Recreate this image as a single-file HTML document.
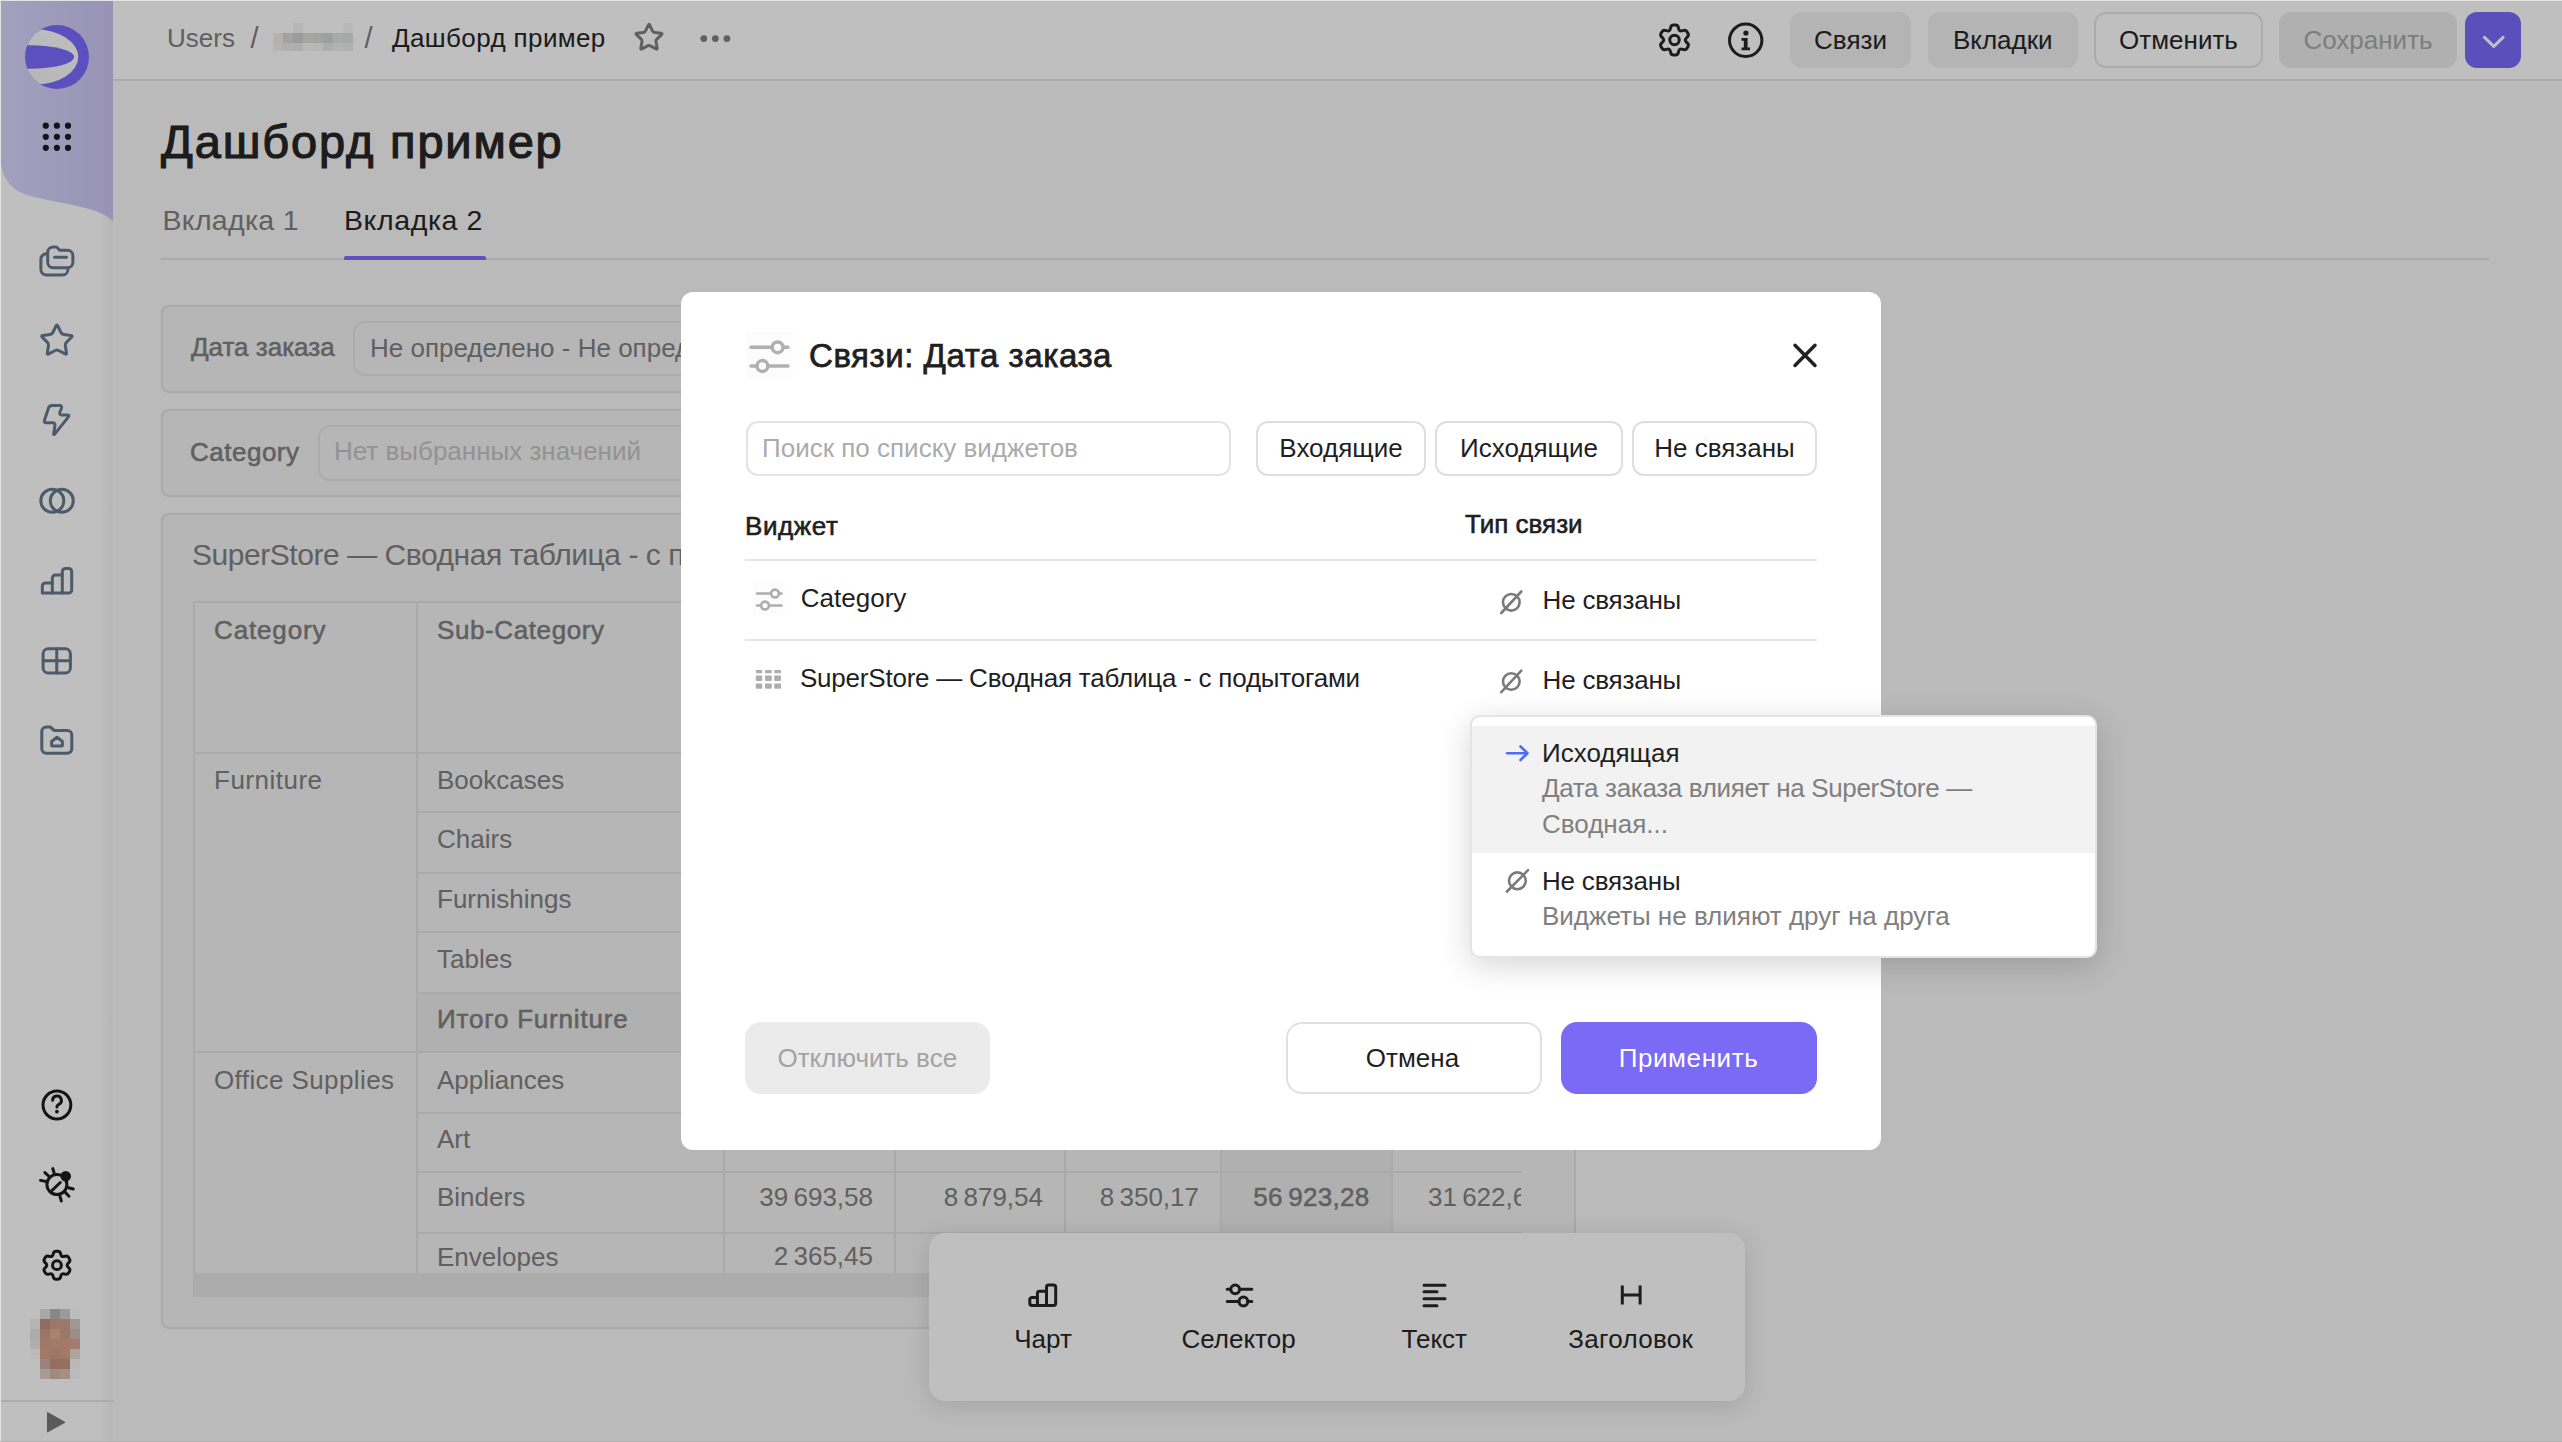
<!DOCTYPE html>
<html><head><meta charset="utf-8">
<style>
*{box-sizing:border-box}
html,body{margin:0;padding:0}
body{width:2562px;height:1442px;overflow:hidden;position:relative;background:#f8f8f8;font-family:"Liberation Sans",sans-serif;color:#262626}
.a{position:absolute}
.t{position:absolute;white-space:nowrap;line-height:1}
svg{position:absolute;overflow:visible}
.ic{fill:none;stroke-linecap:round;stroke-linejoin:round}
</style></head><body>

<div class="a" style="left:113px;top:0px;width:2449px;height:80px;background:#fff"></div>
<div class="a" style="left:113px;top:79px;width:2449px;height:2px;background:#e4e4e4"></div>
<div class="a" style="left:0px;top:0px;width:113px;height:1442px;background:#fff"></div>
<div class="a" style="left:101px;top:0px;width:12px;height:1442px;background:linear-gradient(90deg,rgba(0,0,0,0),rgba(0,0,0,.05))"></div>
<svg style="left:0px;top:0px" width="113" height="230" viewBox="0 0 113 230"><defs><linearGradient id="pg" x1="0" x2="1" y1="0" y2="0"><stop offset="0" stop-color="#dbd6fe"/><stop offset="1" stop-color="#cbc5f2"/></linearGradient></defs><path d="M0 0H113V221C106 215 98 211 85 208C72 204 50 201 30 196C12 191 2 180 0 158Z" fill="url(#pg)"/></svg>
<svg style="left:25px;top:25px" width="64" height="64" viewBox="0 0 64 64"><defs><clipPath id="lc"><circle cx="32" cy="32" r="32"/></clipPath><linearGradient id="lg" x1="0" y1="1" x2="1" y2="0"><stop offset="0" stop-color="#f0f0f6"/><stop offset="1" stop-color="#ffffff"/></linearGradient></defs><circle cx="32" cy="32" r="32" fill="#7a6bfc"/><g clip-path="url(#lc)"><ellipse cx="10" cy="32" rx="43.3" ry="27.7" fill="url(#lg)"/><ellipse cx="5" cy="32" rx="44.2" ry="11.7" fill="#7a6bfc"/></g></svg>
<svg style="left:0px;top:0px" width="113" height="160" viewBox="0 0 113 160"><circle cx="45.8" cy="125.7" r="3.1" fill="#1b1b1b"/><circle cx="45.8" cy="136.8" r="3.1" fill="#1b1b1b"/><circle cx="45.8" cy="147.8" r="3.1" fill="#1b1b1b"/><circle cx="56.9" cy="125.7" r="3.1" fill="#1b1b1b"/><circle cx="56.9" cy="136.8" r="3.1" fill="#1b1b1b"/><circle cx="56.9" cy="147.8" r="3.1" fill="#1b1b1b"/><circle cx="68" cy="125.7" r="3.1" fill="#1b1b1b"/><circle cx="68" cy="136.8" r="3.1" fill="#1b1b1b"/><circle cx="68" cy="147.8" r="3.1" fill="#1b1b1b"/></svg>
<svg style="left:0px;top:0px" width="113" height="800" viewBox="0 0 113 800"><g class="ic" stroke="#66798d" stroke-width="3"><path d="M47.7 262.3V252.5a5.5 5.5 0 0 1 5.5-5.5h3.3l3.4 3.3h7.5a5.5 5.5 0 0 1 5.5 5.5v6.5a5.5 5.5 0 0 1-5.5 5.5H53.2a5.5 5.5 0 0 1-5.5-5.5z"/><path d="M54.5 257.2h12"/><path d="M46.5 253.8a5.5 5.5 0 0 0-5.6 5.5v10.2a5.5 5.5 0 0 0 5.5 5.5h16a5.5 5.5 0 0 0 5.5-5.3"/><path d="M56.01 325.99 Q56.90 324.20 57.79 325.99 L60.98 332.47 Q61.87 334.26 63.85 334.55 L70.99 335.59 Q72.97 335.88 71.54 337.27 L66.37 342.32 Q64.94 343.71 65.27 345.68 L66.50 352.80 Q66.83 354.77 65.06 353.84 L58.67 350.48 Q56.90 349.55 55.13 350.48 L48.74 353.84 Q46.97 354.77 47.30 352.80 L48.53 345.68 Q48.86 343.71 47.43 342.32 L42.26 337.27 Q40.83 335.88 42.81 335.59 L49.95 334.55 Q51.93 334.26 52.82 332.47Z"/><path d="M48.42 408.26 Q49.30 405.60 52.10 405.60 L59.60 405.60 Q62.40 405.60 61.41 408.22 L59.89 412.28 Q58.90 414.90 61.70 414.90 L67.20 414.90 Q70.00 414.90 68.25 417.09 L55.05 433.61 Q53.30 435.80 53.75 433.04 L54.95 425.56 Q55.40 422.80 52.60 422.80 L46.40 422.80 Q43.60 422.80 44.48 420.14Z"/><circle cx="52.3" cy="500.8" r="11.5"/><circle cx="61.8" cy="500.8" r="11.5"/><path d="M42.3 593.1V586a3 3 0 0 1 3-3H52.3V578.1a3 3 0 0 1 3-3H62.3V571.5a3 3 0 0 1 3-3H68.7a3 3 0 0 1 3 3V590.1a3 3 0 0 1-3 3Z"/><path d="M52.3 583V593M62.3 575.1V593"/><rect x="43.1" y="648.8" width="27.3" height="24.1" rx="5"/><path d="M56.75 648.8V672.9M43.1 660.85H70.4"/><path d="M41.8 731.5a4.5 4.5 0 0 1 4.5-4.5h4l4 3.5h13a4.5 4.5 0 0 1 4.5 4.5v13.7a4.5 4.5 0 0 1-4.5 4.5H46.3a4.5 4.5 0 0 1-4.5-4.5z"/><path d="M51.6 741.5l5.4-4.3 5.4 4.3v3.5a1 1 0 0 1-1 1h-8.8a1 1 0 0 1-1-1z"/></g></svg>
<svg style="left:0px;top:1000px" width="113" height="442" viewBox="0 0 113 442"><g class="ic" stroke="#1b1b1b" stroke-width="3"><circle cx="56.9" cy="105" r="13.9"/><path d="M52.6 100.2a4.4 4.4 0 1 1 6.2 4.2c-1.3.6-1.9 1.4-1.9 2.6"/><circle cx="56.9" cy="184.5" r="10"/><path d="M52 190.5L60.3 182.5"/><path d="M52.8 168.6L54.2 173.2M44.9 172.6L48.6 176M40.5 180.4L45.4 181.4M73.3 189L68.4 187.8M69 196.2L65.3 192.4M61.3 201L59.9 196.2"/></g><circle cx="65.7" cy="176.3" r="5.3" fill="#1b1b1b"/><circle cx="56.9" cy="111.6" r="1.9" fill="#1b1b1b"/><g class="ic" stroke="#1b1b1b" stroke-width="3"><path d="M51.87 256.41 Q52.70 255.93 53.28 253.80 L53.40 253.34 Q53.98 251.21 56.18 251.21 L57.72 251.21 Q59.92 251.21 60.50 253.34 L60.62 253.80 Q61.20 255.93 62.03 256.41 L62.03 256.41 Q62.86 256.89 64.98 256.32 L65.45 256.20 Q67.58 255.63 68.68 257.54 L69.45 258.88 Q70.55 260.78 69.00 262.34 L68.66 262.68 Q67.10 264.24 67.10 265.20 L67.10 265.20 Q67.10 266.16 68.66 267.72 L69.00 268.06 Q70.55 269.62 69.45 271.52 L68.68 272.86 Q67.58 274.77 65.45 274.20 L64.98 274.08 Q62.86 273.51 62.03 273.99 L62.03 273.99 Q61.20 274.47 60.62 276.60 L60.50 277.06 Q59.92 279.19 57.72 279.19 L56.18 279.19 Q53.98 279.19 53.40 277.06 L53.28 276.60 Q52.70 274.47 51.87 273.99 L51.87 273.99 Q51.04 273.51 48.92 274.08 L48.45 274.20 Q46.32 274.77 45.22 272.86 L44.45 271.52 Q43.35 269.62 44.90 268.06 L45.24 267.72 Q46.80 266.16 46.80 265.20 L46.80 265.20 Q46.80 264.24 45.24 262.68 L44.90 262.34 Q43.35 260.78 44.45 258.88 L45.22 257.54 Q46.32 255.63 48.45 256.20 L48.92 256.32 Q51.04 256.89 51.87 256.41Z"/><circle cx="56.95" cy="265.2" r="4.4"/></g></svg>
<div class="a" style="left:40px;top:1309px;width:10px;height:10px;background:#e1e1e1"></div>
<div class="a" style="left:50px;top:1309px;width:10px;height:10px;background:#b8b5b5"></div>
<div class="a" style="left:60px;top:1309px;width:10px;height:10px;background:#d1cfcf"></div>
<div class="a" style="left:70px;top:1309px;width:10px;height:10px;background:#fdfdfd"></div>
<div class="a" style="left:30px;top:1319px;width:10px;height:10px;background:#f1f1f1"></div>
<div class="a" style="left:40px;top:1319px;width:10px;height:10px;background:#bf917d"></div>
<div class="a" style="left:50px;top:1319px;width:10px;height:10px;background:#d0a088"></div>
<div class="a" style="left:60px;top:1319px;width:10px;height:10px;background:#d5a28a"></div>
<div class="a" style="left:70px;top:1319px;width:10px;height:10px;background:#d3cac8"></div>
<div class="a" style="left:30px;top:1329px;width:10px;height:10px;background:#e8e5e4"></div>
<div class="a" style="left:40px;top:1329px;width:10px;height:10px;background:#cf9e86"></div>
<div class="a" style="left:50px;top:1329px;width:10px;height:10px;background:#e2ae95"></div>
<div class="a" style="left:60px;top:1329px;width:10px;height:10px;background:#d1a089"></div>
<div class="a" style="left:70px;top:1329px;width:10px;height:10px;background:#d3bcb3"></div>
<div class="a" style="left:30px;top:1339px;width:10px;height:10px;background:#eee8e8"></div>
<div class="a" style="left:40px;top:1339px;width:10px;height:10px;background:#d5a28a"></div>
<div class="a" style="left:50px;top:1339px;width:10px;height:10px;background:#dca28d"></div>
<div class="a" style="left:60px;top:1339px;width:10px;height:10px;background:#dca08a"></div>
<div class="a" style="left:70px;top:1339px;width:10px;height:10px;background:#dba692"></div>
<div class="a" style="left:30px;top:1349px;width:10px;height:10px;background:#fbf8f8"></div>
<div class="a" style="left:40px;top:1349px;width:10px;height:10px;background:#d9a289"></div>
<div class="a" style="left:50px;top:1349px;width:10px;height:10px;background:#d39d8e"></div>
<div class="a" style="left:60px;top:1349px;width:10px;height:10px;background:#dca28c"></div>
<div class="a" style="left:70px;top:1349px;width:10px;height:10px;background:#e8dad5"></div>
<div class="a" style="left:40px;top:1359px;width:10px;height:10px;background:#cdb1a5"></div>
<div class="a" style="left:50px;top:1359px;width:10px;height:10px;background:#c8927e"></div>
<div class="a" style="left:60px;top:1359px;width:10px;height:10px;background:#c69580"></div>
<div class="a" style="left:70px;top:1359px;width:10px;height:10px;background:#f9f6f5"></div>
<div class="a" style="left:40px;top:1369px;width:10px;height:10px;background:#dccfca"></div>
<div class="a" style="left:50px;top:1369px;width:10px;height:10px;background:#d4b8aa"></div>
<div class="a" style="left:60px;top:1369px;width:10px;height:10px;background:#dcbeb6"></div>
<div class="a" style="left:70px;top:1369px;width:10px;height:10px;background:#fbf9f8"></div>
<div class="a" style="left:1px;top:1400px;width:112px;height:2px;background:#e6e6e6"></div>
<svg style="left:0px;top:1400px" width="113" height="42" viewBox="0 0 113 42"><path d="M47.5 12.5L65 22.3L47.5 32Z" fill="#787878" stroke="#787878" stroke-width="1" stroke-linejoin="round"/></svg>
<div class="t" style="top:25.0px;font-size:26px;color:#808080;left:167px;">Users</div>
<div class="t" style="top:23.5px;font-size:29px;color:#808080;left:250.5px;">/</div>
<div class="t" style="top:23.5px;font-size:29px;color:#808080;left:364.5px;">/</div>
<div class="a" style="left:293px;top:23px;width:10px;height:10px;background:#f5f5f5"></div>
<div class="a" style="left:343px;top:23px;width:10px;height:10px;background:#f6f6f6"></div>
<div class="a" style="left:273px;top:33px;width:10px;height:10px;background:#efeeeb"></div>
<div class="a" style="left:283px;top:33px;width:10px;height:10px;background:#d8d8d5"></div>
<div class="a" style="left:293px;top:33px;width:10px;height:10px;background:#cfcfd3"></div>
<div class="a" style="left:303px;top:33px;width:10px;height:10px;background:#dcdcdc"></div>
<div class="a" style="left:313px;top:33px;width:10px;height:10px;background:#dbdad5"></div>
<div class="a" style="left:323px;top:33px;width:10px;height:10px;background:#d3d4d8"></div>
<div class="a" style="left:333px;top:33px;width:10px;height:10px;background:#e3e3e0"></div>
<div class="a" style="left:343px;top:33px;width:10px;height:10px;background:#dfe3e2"></div>
<div class="a" style="left:273px;top:43px;width:10px;height:8px;background:#f0f0f0"></div>
<div class="a" style="left:283px;top:43px;width:10px;height:8px;background:#ebebe8"></div>
<div class="a" style="left:293px;top:43px;width:10px;height:8px;background:#e9e9ec"></div>
<div class="a" style="left:303px;top:43px;width:10px;height:8px;background:#f7f7f7"></div>
<div class="a" style="left:313px;top:43px;width:10px;height:8px;background:#f5f5f4"></div>
<div class="a" style="left:323px;top:43px;width:10px;height:8px;background:#e7e8eb"></div>
<div class="a" style="left:333px;top:43px;width:10px;height:8px;background:#efefeb"></div>
<div class="a" style="left:343px;top:43px;width:10px;height:8px;background:#ebedf0"></div>
<div class="t" style="top:25.0px;font-size:26px;color:#262626;letter-spacing:0.38px;left:392px;">Дашборд пример</div>
<svg style="left:0px;top:0px" width="800" height="80" viewBox="0 0 800 80"><g class="ic" stroke="#808080" stroke-width="3"><path d="M648.31 25.04 Q649.00 23.60 649.69 25.04 L652.46 30.85 Q653.15 32.29 654.73 32.50 L661.11 33.34 Q662.70 33.55 661.53 34.65 L656.87 39.08 Q655.71 40.18 656.00 41.75 L657.17 48.08 Q657.46 49.65 656.06 48.89 L650.41 45.82 Q649.00 45.06 647.59 45.82 L641.94 48.89 Q640.54 49.65 640.83 48.08 L642.00 41.75 Q642.29 40.18 641.13 39.08 L636.47 34.65 Q635.30 33.55 636.89 33.34 L643.27 32.50 Q644.85 32.29 645.54 30.85Z"/></g><circle cx="703.8" cy="38.6" r="3.4" fill="#808080"/><circle cx="715.3" cy="38.6" r="3.4" fill="#808080"/><circle cx="726.9" cy="38.6" r="3.4" fill="#808080"/></svg>
<svg style="left:1600px;top:0px" width="200" height="80" viewBox="0 0 200 80"><g class="ic" stroke="#262626" stroke-width="3"><path d="M69.12 30.69 Q70.00 30.18 70.55 28.05 L70.77 27.17 Q71.32 25.03 73.52 25.03 L75.48 25.03 Q77.68 25.03 78.23 27.17 L78.45 28.05 Q79.00 30.18 79.88 30.69 L79.88 30.69 Q80.76 31.20 82.87 30.60 L83.75 30.36 Q85.87 29.76 86.97 31.67 L87.95 33.37 Q89.05 35.27 87.48 36.81 L86.83 37.45 Q85.25 38.98 85.25 40.00 L85.25 40.00 Q85.25 41.02 86.83 42.55 L87.48 43.19 Q89.05 44.73 87.95 46.63 L86.97 48.33 Q85.87 50.24 83.75 49.64 L82.87 49.40 Q80.76 48.80 79.88 49.31 L79.88 49.31 Q79.00 49.82 78.45 51.95 L78.23 52.83 Q77.68 54.97 75.48 54.97 L73.52 54.97 Q71.32 54.97 70.77 52.83 L70.55 51.95 Q70.00 49.82 69.12 49.31 L69.12 49.31 Q68.24 48.80 66.13 49.40 L65.25 49.64 Q63.13 50.24 62.03 48.33 L61.05 46.63 Q59.95 44.73 61.52 43.19 L62.17 42.55 Q63.75 41.02 63.75 40.00 L63.75 40.00 Q63.75 38.98 62.17 37.45 L61.52 36.81 Q59.95 35.27 61.05 33.37 L62.03 31.67 Q63.13 29.76 65.25 30.36 L66.13 30.60 Q68.24 31.20 69.12 30.69Z"/><circle cx="74.5" cy="40" r="4.7"/><circle cx="145.7" cy="40.3" r="16.2"/></g><circle cx="145.9" cy="33" r="2.6" fill="#262626"/><path d="M141.5 38H147.6V47.5H150V50.3H141.5V47.5H143.8V40.8H141.5Z" fill="#262626"/></svg>
<div class="a" style="left:1790px;top:12px;width:121px;height:56px;border-radius:12px;background:rgba(0,0,0,.06)"></div>
<div class="t" style="top:26.7px;font-size:26px;color:#262626;left:1850.5px;transform:translateX(-50%);">Связи</div>
<div class="a" style="left:1927.5px;top:12px;width:150.5px;height:56px;border-radius:12px;background:rgba(0,0,0,.06)"></div>
<div class="t" style="top:26.7px;font-size:26px;color:#262626;left:2002.75px;transform:translateX(-50%);">Вкладки</div>
<div class="a" style="left:2094px;top:12px;width:169px;height:56px;border-radius:12px;border:2px solid rgba(0,0,0,.1)"></div>
<div class="t" style="top:26.7px;font-size:26px;color:#262626;left:2178.5px;transform:translateX(-50%);">Отменить</div>
<div class="a" style="left:2279px;top:12px;width:178px;height:56px;border-radius:12px;background:rgba(0,0,0,.08)"></div>
<div class="t" style="top:26.7px;font-size:26px;color:#a8a8a8;left:2368.0px;transform:translateX(-50%);">Сохранить</div>
<div class="a" style="left:2465px;top:12px;width:56px;height:56px;border-radius:12px;background:#796bfb"></div>
<svg style="left:2465px;top:12px" width="56" height="56" viewBox="0 0 56 56"><path class="ic" d="M19.5 25.3L28.8 34.3L38.1 25.3" stroke="#fff" stroke-width="3"/></svg>
<div class="t" style="top:118.0px;font-size:47px;color:#262626;-webkit-text-stroke:1.15px #262626;letter-spacing:1.85px;left:161px;">Дашборд пример</div>
<div class="t" style="top:206.4px;font-size:28.5px;color:#808080;letter-spacing:0.3px;left:162.5px;">Вкладка 1</div>
<div class="t" style="top:206.4px;font-size:28.5px;color:#262626;letter-spacing:0.6px;left:344px;">Вкладка 2</div>
<div class="a" style="left:161px;top:258px;width:2328px;height:2px;background:#e4e4e4"></div>
<div class="a" style="left:344px;top:256px;width:142px;height:4px;background:#7a6bfc;border-radius:2px 2px 0 0"></div>
<div class="a" style="left:161px;top:305px;width:1415px;height:88px;background:#f3f3f3;border:2px solid #e2e2e2;border-radius:8px"></div>
<div class="t" style="top:334.4px;font-size:26px;color:#808080;-webkit-text-stroke:0.55px #808080;left:191px;">Дата заказа</div>
<div class="a" style="left:353px;top:321px;width:700px;height:54.5px;border:2px solid #e6e6e6;border-radius:12px"></div>
<div class="t" style="top:335.0px;font-size:26px;color:#808080;left:370px;">Не определено - Не определено</div>
<div class="a" style="left:161px;top:409px;width:1415px;height:88px;background:#f3f3f3;border:2px solid #e2e2e2;border-radius:8px"></div>
<div class="t" style="top:438.5px;font-size:26px;color:#808080;-webkit-text-stroke:0.55px #808080;letter-spacing:0.5px;left:190px;">Category</div>
<div class="a" style="left:318px;top:425px;width:700px;height:55.5px;border:2px solid #e6e6e6;border-radius:12px"></div>
<div class="t" style="top:438.0px;font-size:26px;color:#c4c4c4;left:334px;">Нет выбранных значений</div>
<div class="a" style="left:161px;top:513px;width:1415px;height:816px;background:#f3f3f3;border:2px solid #e2e2e2;border-radius:8px"></div>
<div class="t" style="top:540.4px;font-size:30px;color:#808080;letter-spacing:-0.45px;left:192px;">SuperStore — Сводная таблица - с подытогами</div>
<div class="a" style="left:193px;top:601px;width:1328px;height:672px;overflow:hidden">
<div class="a" style="left:1027.6px;top:0px;width:171.7px;height:700px;background:#ebebeb"></div>
<div class="a" style="left:223px;top:391px;width:1200px;height:59.5px;background:#ebebeb"></div>
<div class="a" style="left:0px;top:0px;width:1400px;height:2px;background:#e3e3e3"></div>
<div class="a" style="left:0px;top:150.5px;width:1400px;height:2px;background:#e3e3e3"></div>
<div class="a" style="left:223px;top:210px;width:1400px;height:2px;background:#e3e3e3"></div>
<div class="a" style="left:223px;top:270.5px;width:1400px;height:2px;background:#e3e3e3"></div>
<div class="a" style="left:223px;top:330px;width:1400px;height:2px;background:#e3e3e3"></div>
<div class="a" style="left:223px;top:390.5px;width:1400px;height:2px;background:#e3e3e3"></div>
<div class="a" style="left:0px;top:449.79999999999995px;width:1400px;height:2px;background:#e3e3e3"></div>
<div class="a" style="left:223px;top:510.5px;width:1400px;height:2px;background:#e3e3e3"></div>
<div class="a" style="left:223px;top:569.5px;width:1400px;height:2px;background:#e3e3e3"></div>
<div class="a" style="left:223px;top:630.5px;width:1400px;height:2px;background:#e3e3e3"></div>
<div class="a" style="left:0px;top:0px;width:2px;height:700px;background:#e3e3e3"></div>
<div class="a" style="left:222.5px;top:0px;width:2px;height:700px;background:#e3e3e3"></div>
<div class="a" style="left:529.5px;top:0px;width:2px;height:700px;background:#e3e3e3"></div>
<div class="a" style="left:701px;top:0px;width:2px;height:700px;background:#e3e3e3"></div>
<div class="a" style="left:870.5px;top:0px;width:2px;height:700px;background:#e3e3e3"></div>
<div class="a" style="left:1026.6px;top:0px;width:2px;height:700px;background:#e3e3e3"></div>
<div class="a" style="left:1198.3px;top:0px;width:2px;height:700px;background:#e3e3e3"></div>
</div>
<div class="t" style="top:617.0px;font-size:26px;color:#808080;-webkit-text-stroke:0.55px #808080;letter-spacing:0.85px;left:214px;">Category</div>
<div class="t" style="top:617.0px;font-size:26px;color:#808080;-webkit-text-stroke:0.55px #808080;letter-spacing:0.6px;left:437px;">Sub-Category</div>
<div class="t" style="top:766.7px;font-size:26px;color:#808080;letter-spacing:0.5px;left:214px;">Furniture</div>
<div class="t" style="top:766.7px;font-size:26px;color:#808080;left:437px;">Bookcases</div>
<div class="t" style="top:825.5px;font-size:26px;color:#808080;left:437px;">Chairs</div>
<div class="t" style="top:885.5px;font-size:26px;color:#808080;left:437px;">Furnishings</div>
<div class="t" style="top:945.5px;font-size:26px;color:#808080;left:437px;">Tables</div>
<div class="t" style="top:1006.0px;font-size:26px;color:#808080;-webkit-text-stroke:0.55px #808080;letter-spacing:0.8px;left:437px;">Итого Furniture</div>
<div class="t" style="top:1067.0px;font-size:26px;color:#808080;letter-spacing:0.4px;left:214px;">Office Supplies</div>
<div class="t" style="top:1067.0px;font-size:26px;color:#808080;left:437px;">Appliances</div>
<div class="t" style="top:1126.0px;font-size:26px;color:#808080;left:437px;">Art</div>
<div class="t" style="top:1184.0px;font-size:26px;color:#808080;left:437px;">Binders</div>
<div class="t" style="top:1244.0px;font-size:26px;color:#808080;left:437px;">Envelopes</div>
<div class="t" style="top:1184.0px;font-size:26px;color:#808080;right:1689px;">39 693,58</div>
<div class="t" style="top:1184.0px;font-size:26px;color:#808080;right:1519px;">8 879,54</div>
<div class="t" style="top:1184.0px;font-size:26px;color:#808080;right:1363px;">8 350,17</div>
<div class="t" style="top:1184.0px;font-size:26px;color:#808080;-webkit-text-stroke:0.5px #808080;letter-spacing:0.3px;right:1192.4px;">56 923,28</div>
<div class="a" style="left:1392px;top:1170px;width:129px;height:60px;overflow:hidden">
<div class="t" style="top:14.0px;font-size:26px;color:#808080;left:36px;">31 622,69</div>
</div>
<div class="t" style="top:1243.0px;font-size:26px;color:#808080;right:1689px;">2 365,45</div>
<div class="a" style="left:193px;top:1273px;width:1360px;height:24px;background:#e6e6e6"></div>
<div class="a" style="left:929px;top:1233px;width:816px;height:168px;background:#fff;border-radius:16px;box-shadow:0 4px 24px rgba(0,0,0,.12)"></div>
<svg style="left:0px;top:0px" width="2562" height="1442" viewBox="0 0 2562 1442"><g class="ic" stroke="#262626" stroke-width="3"><path d="M1029.8 1303.3V1299.6a2.2 2.2 0 0 1 2.2-2.2H1037.4V1293.5a2.2 2.2 0 0 1 2.2-2.2H1046.5V1287.2a2.2 2.2 0 0 1 2.2-2.2H1053.5a2.2 2.2 0 0 1 2.2 2.2V1303.3a2.2 2.2 0 0 1-2.2 2.2H1032a2.2 2.2 0 0 1-2.2-2.2Z"/><path d="M1037.4 1297.4V1305.5M1046.5 1291.3V1305.5"/><path d="M1227.2 1289.3H1230.5M1239.8 1289.3H1251.8M1227.2 1301.5H1238.8M1248 1301.5H1251.8"/><circle cx="1235.2" cy="1289.3" r="4.4"/><circle cx="1243.4" cy="1301.5" r="4.4"/><path d="M1424 1285.2H1445M1424 1291.8H1437M1424 1298.8H1445M1424 1305.8H1437"/></g></svg>
<svg style="left:0px;top:0px" width="2562" height="1442" viewBox="0 0 2562 1442"><path class="ic" d="M1622.3 1285.5V1304.5M1640.1 1285.5V1304.5M1622.3 1295H1640.1" stroke="#262626" stroke-width="3" style="stroke-linecap:butt"/></svg>
<div class="t" style="top:1325.5px;font-size:26px;color:#262626;left:1043px;transform:translateX(-50%);">Чарт</div>
<div class="t" style="top:1325.5px;font-size:26px;color:#262626;left:1238.5px;transform:translateX(-50%);">Селектор</div>
<div class="t" style="top:1325.5px;font-size:26px;color:#262626;left:1434.3px;transform:translateX(-50%);">Текст</div>
<div class="t" style="top:1325.5px;font-size:26px;color:#262626;letter-spacing:0.3px;left:1630.8px;transform:translateX(-50%);">Заголовок</div>
<div class="a" style="left:0px;top:0px;width:2562px;height:1442px;background:rgba(0,0,0,.25)"></div>
<div class="a" style="left:681px;top:292px;width:1200px;height:858px;background:#fff;border-radius:12px"></div>
<div class="a" style="left:745.5px;top:332px;width:47px;height:47px;background:#fcfcfc"></div>
<svg style="left:0px;top:0px" width="2562" height="1442" viewBox="0 0 2562 1442"><g class="ic" stroke="#b0b0b0" stroke-width="3.5"><path d="M751 347.3H771.5M784.5 347.3H788M751 366H756M768.5 366H788"/><circle cx="777.6" cy="347.3" r="5.4"/><circle cx="762.4" cy="366" r="5.4"/></g><path class="ic" d="M1795 345.3L1815 365.4M1815 345.3L1795 365.4" stroke="#222" stroke-width="3.5"/></svg>
<div class="t" style="top:338.6px;font-size:33px;color:#1f1f1f;-webkit-text-stroke:0.75px #1f1f1f;letter-spacing:0.55px;left:809px;">Связи: Дата заказа</div>
<div class="a" style="left:745.5px;top:420.5px;width:485px;height:55.5px;border:2px solid #e3e3e3;border-radius:12px"></div>
<div class="t" style="top:435.4px;font-size:26px;color:#ababab;left:762px;">Поиск по списку виджетов</div>
<div class="a" style="left:1256px;top:420.5px;width:170px;height:55.5px;border:2px solid #dedede;border-radius:12px"></div>
<div class="t" style="top:435.4px;font-size:26px;color:#1f1f1f;left:1341.0px;transform:translateX(-50%);">Входящие</div>
<div class="a" style="left:1435px;top:420.5px;width:188px;height:55.5px;border:2px solid #dedede;border-radius:12px"></div>
<div class="t" style="top:435.4px;font-size:26px;color:#1f1f1f;left:1529.0px;transform:translateX(-50%);">Исходящие</div>
<div class="a" style="left:1632px;top:420.5px;width:185px;height:55.5px;border:2px solid #dedede;border-radius:12px"></div>
<div class="t" style="top:435.4px;font-size:26px;color:#1f1f1f;left:1724.5px;transform:translateX(-50%);">Не связаны</div>
<div class="t" style="top:512.7px;font-size:26px;color:#1f1f1f;-webkit-text-stroke:0.6px #1f1f1f;letter-spacing:0.6px;left:745px;">Виджет</div>
<div class="t" style="top:511.4px;font-size:26px;color:#1f1f1f;-webkit-text-stroke:0.6px #1f1f1f;left:1465px;">Тип связи</div>
<div class="a" style="left:745px;top:559px;width:1072px;height:2px;background:#e5e5e5"></div>
<div class="a" style="left:745px;top:638.5px;width:1072px;height:2px;background:#e5e5e5"></div>
<svg style="left:0px;top:0px" width="2562" height="1442" viewBox="0 0 2562 1442"><rect x="753" y="583" width="32" height="32" fill="#fcfcfc"/><g class="ic" stroke="#adadad" stroke-width="2.6"><path d="M757 593.5H770.5M779.5 593.5H781.5M757 605.5H760.5M769.5 605.5H781.5"/><circle cx="775" cy="593.5" r="3.9"/><circle cx="765" cy="605.5" r="3.9"/></g><g fill="#adadad"><rect x="755.8" y="670" width="6.4" height="3.2" rx="0.8"/><rect x="755.8" y="675.6" width="6.4" height="5.3" rx="0.8"/><rect x="755.8" y="683.4" width="6.4" height="5.3" rx="0.8"/><rect x="765" y="670" width="6.8" height="3.2" rx="0.8"/><rect x="765" y="675.6" width="6.8" height="5.3" rx="0.8"/><rect x="765" y="683.4" width="6.8" height="5.3" rx="0.8"/><rect x="774.2" y="670" width="6.8" height="3.2" rx="0.8"/><rect x="774.2" y="675.6" width="6.8" height="5.3" rx="0.8"/><rect x="774.2" y="683.4" width="6.8" height="5.3" rx="0.8"/></g><g class="ic" stroke="#7a7a7a" stroke-width="2.6"><circle cx="1511.3" cy="602.3" r="8.3"/><path d="M1501.3 613L1521.3 591.5"/><circle cx="1511.3" cy="681.5" r="8.3"/><path d="M1501.3 692.2L1521.3 670.7"/></g></svg>
<div class="t" style="top:585.3px;font-size:26px;color:#1f1f1f;left:800.8px;">Category</div>
<div class="t" style="top:587.4px;font-size:26px;color:#1f1f1f;letter-spacing:-0.2px;left:1542.6px;">Не связаны</div>
<div class="t" style="top:665.3px;font-size:26px;color:#1f1f1f;letter-spacing:-0.22px;left:800px;">SuperStore — Сводная таблица - с подытогами</div>
<div class="t" style="top:666.5px;font-size:26px;color:#1f1f1f;letter-spacing:-0.2px;left:1542.6px;">Не связаны</div>
<div class="a" style="left:745px;top:1021.5px;width:244.5px;height:72px;background:#ebebeb;border-radius:16px"></div>
<div class="t" style="top:1044.5px;font-size:26px;color:#a3a3a3;left:867.3px;transform:translateX(-50%);">Отключить все</div>
<div class="a" style="left:1286px;top:1021.5px;width:256px;height:72px;border:2px solid #e0e0e0;border-radius:16px"></div>
<div class="t" style="top:1044.5px;font-size:26px;color:#1f1f1f;left:1412.5px;transform:translateX(-50%);">Отмена</div>
<div class="a" style="left:1561px;top:1021.5px;width:256px;height:72px;background:#7b6af5;border-radius:16px"></div>
<div class="t" style="top:1044.5px;font-size:26px;color:#fff;letter-spacing:0.6px;left:1688.5px;transform:translateX(-50%);">Применить</div>
<div class="a" style="left:1469.5px;top:714.5px;width:627px;height:243px;background:#fff;border:2px solid #e4e4e4;border-radius:10px;box-shadow:0 8px 32px rgba(0,0,0,.16)"></div>
<div class="a" style="left:1471.5px;top:725.8px;width:623px;height:127.6px;background:#f2f2f2"></div>
<svg style="left:0px;top:0px" width="2562" height="1442" viewBox="0 0 2562 1442"><g class="ic" stroke="#4d6ef0" stroke-width="2.6"><path d="M1507 753.2H1527.5M1520.5 746.5L1527.5 753.2L1520.5 760"/></g><g class="ic" stroke="#7a7a7a" stroke-width="2.6"><circle cx="1517.4" cy="880.8" r="8.4"/><path d="M1507 891.5L1528 870.2"/></g></svg>
<div class="t" style="top:739.5px;font-size:26px;color:#1f1f1f;left:1542px;">Исходящая</div>
<div class="t" style="top:775.2px;font-size:26px;color:#808080;letter-spacing:-0.34px;left:1542px;">Дата заказа влияет на SuperStore —</div>
<div class="t" style="top:811.2px;font-size:26px;color:#808080;left:1542px;">Сводная...</div>
<div class="t" style="top:867.6px;font-size:26px;color:#1f1f1f;letter-spacing:-0.2px;left:1542px;">Не связаны</div>
<div class="t" style="top:903.4px;font-size:26px;color:#808080;left:1542px;">Виджеты не влияют друг на друга</div>
<div class="a" style="left:0px;top:0px;width:2562px;height:1px;background:#e3e3e3"></div>
<div class="a" style="left:0px;top:0px;width:1px;height:1442px;background:#e3e3e3"></div>
<div class="a" style="left:0px;top:1441px;width:2562px;height:1px;background:#b3b3b3"></div>
</body></html>
